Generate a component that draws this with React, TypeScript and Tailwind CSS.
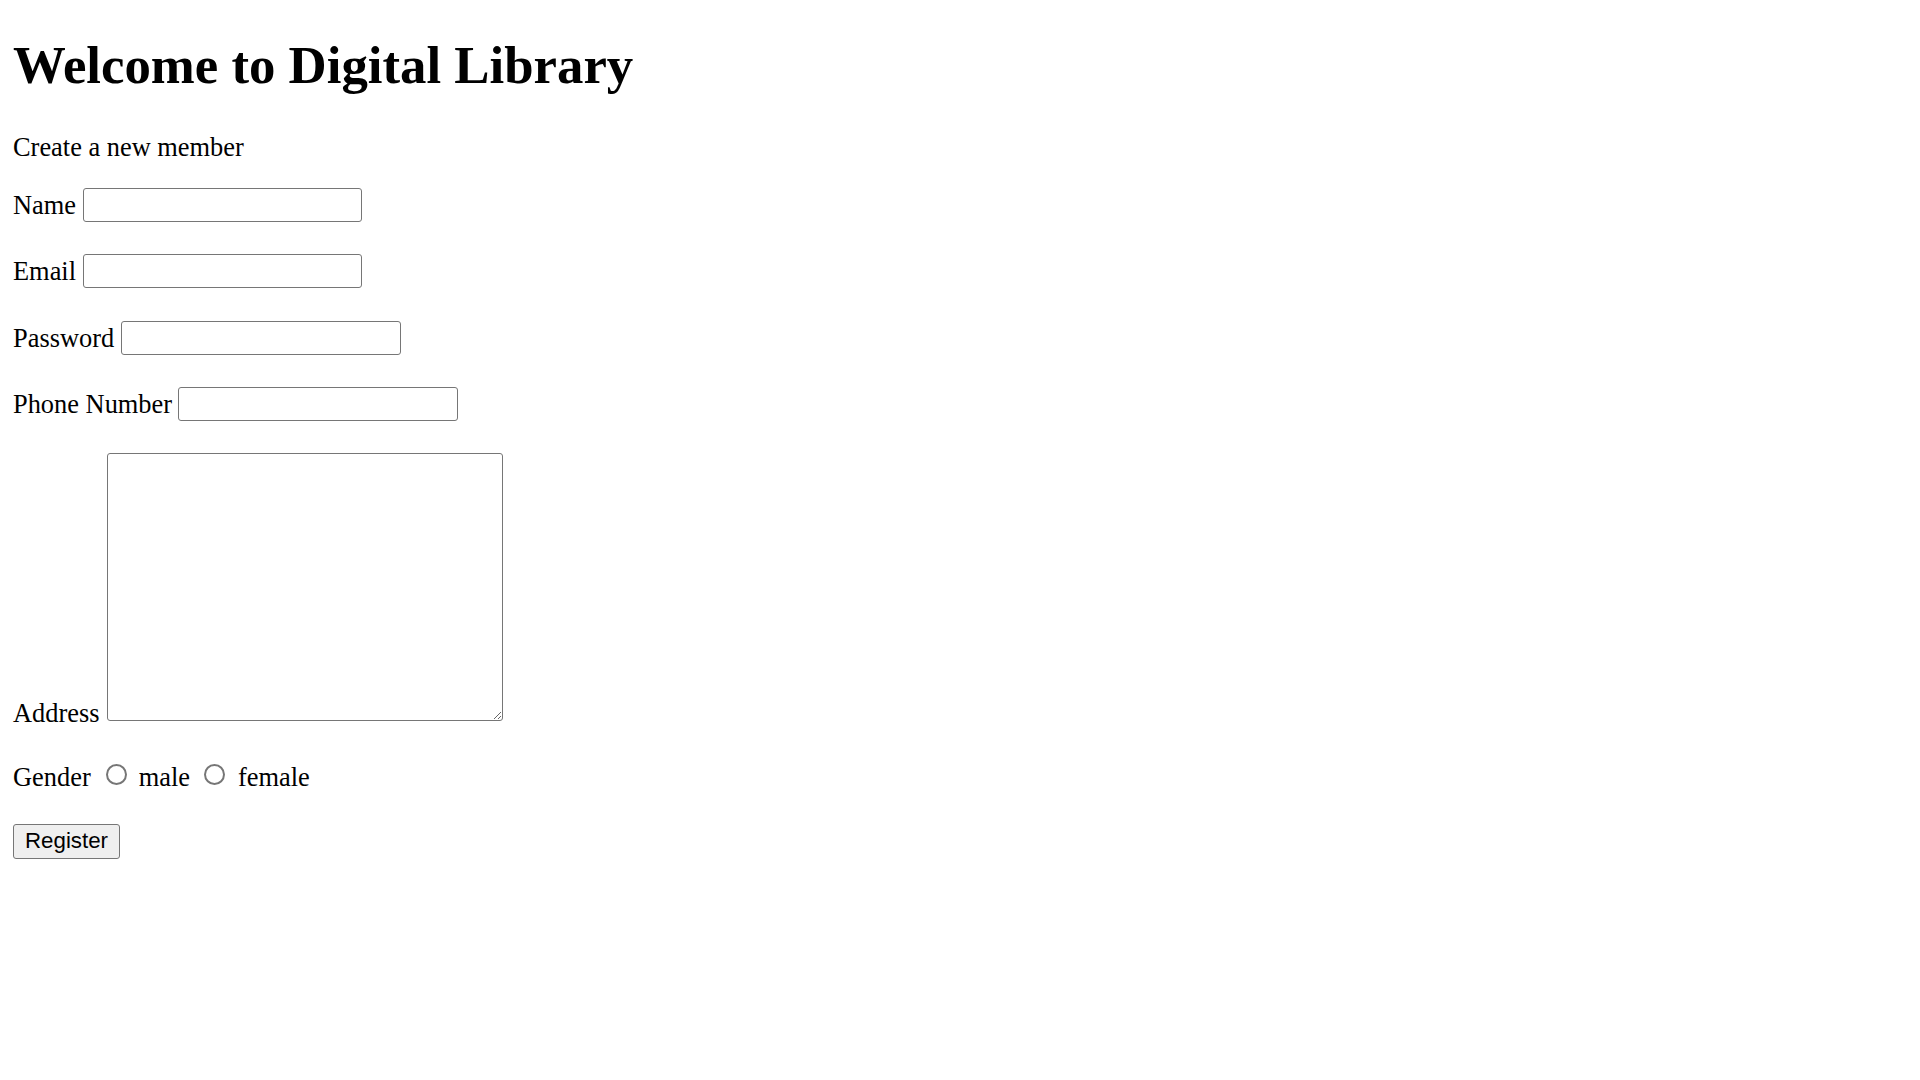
import { useState } from 'react'

const serif = "font-['Liberation_Serif','Times_New_Roman',serif]"
const field =
  'h-[34px] rounded-[3px] border border-[#767676] bg-white px-[3px] font-[Liberation_Sans,Arial,sans-serif] text-[21.67px] outline-none'
const radio =
  'mt-[2px] h-[21px] w-[21px] appearance-none rounded-full border-2 border-[#767676] bg-white checked:border-[6px] checked:border-[#0075ff]'

function Row({ label, width, mt, gap }: { label: string; width: string; mt: string; gap: string }) {
  return (
    <div className={`flex h-[34px] items-center ${gap} ${mt}`}>
      <label className="leading-[30px]">{label}</label>
      <input type="text" className={`${field} ${width}`} />
    </div>
  )
}

export default function App() {
  const [gender, setGender] = useState('')

  return (
    <div className={`min-h-screen bg-white px-[13px] pt-[35px] text-[26.4px] text-black ${serif}`}>
      <h1 className="text-[52.8px] font-bold leading-[60px]">Welcome to Digital Library</h1>
      <p className="mt-[37px] leading-[30px]">Create a new member</p>

      <form onSubmit={(e) => e.preventDefault()}>
        <Row label="Name" width="w-[279px]" mt="mt-[26px]" gap="gap-[7px]" />
        <Row label="Email" width="w-[279px]" mt="mt-[32px]" gap="gap-[7px]" />
        <Row label="Password" width="w-[280px]" mt="mt-[33px]" gap="gap-[7px]" />
        <Row label="Phone Number" width="w-[280px]" mt="mt-[32px]" gap="gap-[6px]" />

        <div className="mt-[32px] flex items-end gap-[7px]">
          <label className="leading-[15px]">Address</label>
          <textarea className="h-[268px] w-[396px] resize rounded-[3px] border border-[#767676] bg-white p-[3px] font-[Liberation_Mono,monospace] text-[21.67px] outline-none" />
        </div>

        <div className="mt-[41px] flex h-[30px] items-start">
          <span className="leading-[30px]">Gender</span>
          <input
            type="radio"
            name="gender"
            checked={gender === 'male'}
            onChange={() => setGender('male')}
            className={`ml-[15px] ${radio}`}
          />
          <span className="ml-[12px] leading-[30px]">male</span>
          <input
            type="radio"
            name="gender"
            checked={gender === 'female'}
            onChange={() => setGender('female')}
            className={`ml-[14px] ${radio}`}
          />
          <span className="ml-[13px] leading-[30px]">female</span>
        </div>

        <button
          type="submit"
          className="mt-[32px] flex h-[35px] w-[107px] items-center justify-center rounded-[3px] border border-[#767676] bg-[#efefef] font-[Liberation_Sans,Arial,sans-serif] text-[22.3px] leading-none hover:bg-[#e5e5e5]"
        >
          Register
        </button>
      </form>
    </div>
  )
}
